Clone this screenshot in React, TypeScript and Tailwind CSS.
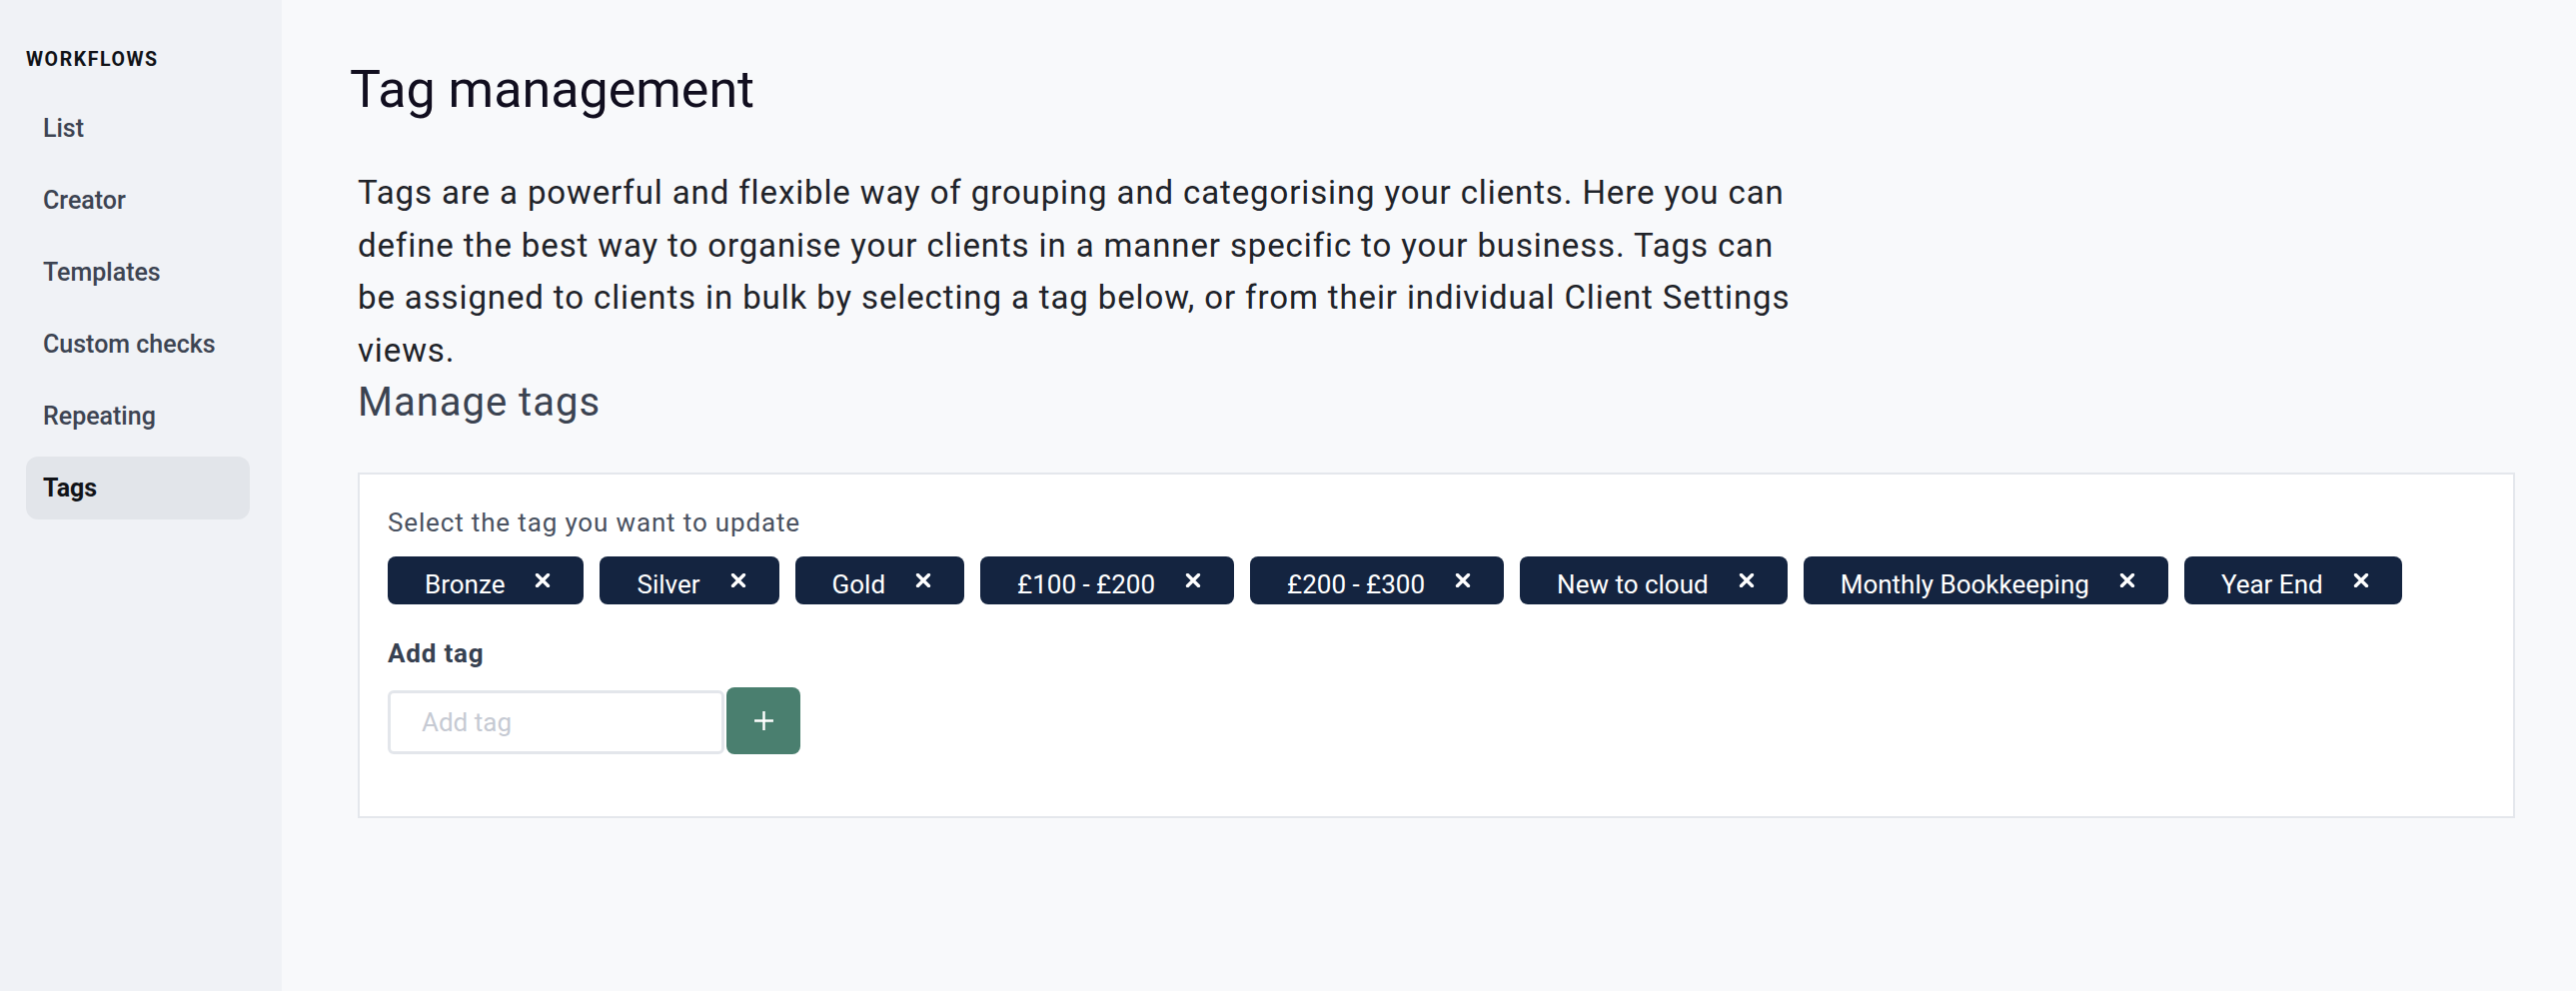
import React from 'react';

const navItems = ['List', 'Creator', 'Templates', 'Custom checks', 'Repeating', 'Tags'];
const tags = ['Bronze', 'Silver', 'Gold', '£100 - £200', '£200 - £300', 'New to cloud', 'Monthly Bookkeeping', 'Year End'];

function CloseIcon() {
  return (
    <svg width="16" height="14" viewBox="0 0 16 14" fill="none" className="shrink-0">
      <path d="M2.5 1.5L13.5 12.5M13.5 1.5L2.5 12.5" stroke="white" strokeWidth="3.3" strokeLinecap="round" />
    </svg>
  );
}

function PlusIcon() {
  return (
    <svg width="21" height="21" viewBox="0 0 20 20" fill="none">
      <path d="M10 1V19M1 10H19" stroke="white" strokeWidth="2.3" />
    </svg>
  );
}

function Sidebar() {
  return (
    <aside className="w-[282px] shrink-0 min-h-[992px] bg-[#f0f2f6] pl-[26px] pr-[32px] pt-[48px]">
      <div className="text-[19.5px] leading-[24px] font-bold tracking-[0.08em] text-[#111318]">WORKFLOWS</div>
      <nav className="mt-[25px] flex flex-col gap-[9px]">
        {navItems.map((item) => {
          const active = item === 'Tags';
          return (
            <div
              key={item}
              className={
                active
                  ? 'h-[63px] flex items-center pl-[17px] rounded-[12px] bg-[#e2e5ea] text-[25px] font-bold text-[#111318]'
                  : 'h-[63px] flex items-center pl-[17px] rounded-[12px] text-[25px] font-medium text-[#3d4452]'
              }
            >
              {item}
            </div>
          );
        })}
      </nav>
    </aside>
  );
}

export default function App() {
  return (
    <div className="flex min-h-[992px] w-full font-['Roboto',sans-serif]">
      <Sidebar />
      <main className="flex-1 bg-[#f8f9fb] pt-[60px] pl-[68px] pr-[61px]">
        <h1 className="text-[52px] leading-[60px] font-normal text-[#110e1f]">Tag management</h1>
        <div className="pl-[8px]">
          <p className="mt-[47px] w-[1442px] text-[33px] leading-[52.6px] tracking-[0.88px] text-[#1f2329]">
            Tags are a powerful and flexible way of grouping and categorising your clients. Here you can define the best
            way to organise your clients in a manner specific to your business. Tags can be assigned to clients in bulk by
            selecting a tag below, or from their individual Client Settings views.
          </p>
          <h2 className="text-[40px] leading-[52.6px] font-normal tracking-[1px] text-[#3b4351]">Manage tags</h2>

          <section className="mt-[43px] border-2 border-[#e4e7ec] bg-white pl-[28px] pr-[28px] pt-[28px] pb-[62px]">
            <div className="text-[26px] leading-[40px] tracking-[0.85px] text-[#4a5261]">Select the tag you want to update</div>
            <div className="mt-[14px] flex flex-wrap gap-[16px]">
              {tags.map((tag) => (
                <button
                  key={tag}
                  className="h-[48px] flex items-center gap-[30px] pl-[37px] pr-[33px] rounded-[8px] bg-[#142440] text-white text-[26px]"
                >
                  <span className="pt-[8px] leading-[30px]">{tag}</span>
                  <CloseIcon />
                </button>
              ))}
            </div>

            <div className="mt-[29px] text-[26px] leading-[40px] font-bold tracking-[0.8px] text-[#374151]">Add tag</div>
            <div className="mt-[14px] flex items-end gap-[2px]">
              <input
                type="text"
                placeholder="Add tag"
                className="w-[337px] h-[64px] border-[3px] border-[#e3e6eb] rounded-[6px] pl-[31px] text-[26px] text-[#1f2329] placeholder:text-[#c6cad3] outline-none bg-white"
              />
              <button className="w-[74px] h-[67px] rounded-[8px] bg-[#4a7f6f] flex items-center justify-center">
                <PlusIcon />
              </button>
            </div>
          </section>
        </div>
      </main>
    </div>
  );
}
